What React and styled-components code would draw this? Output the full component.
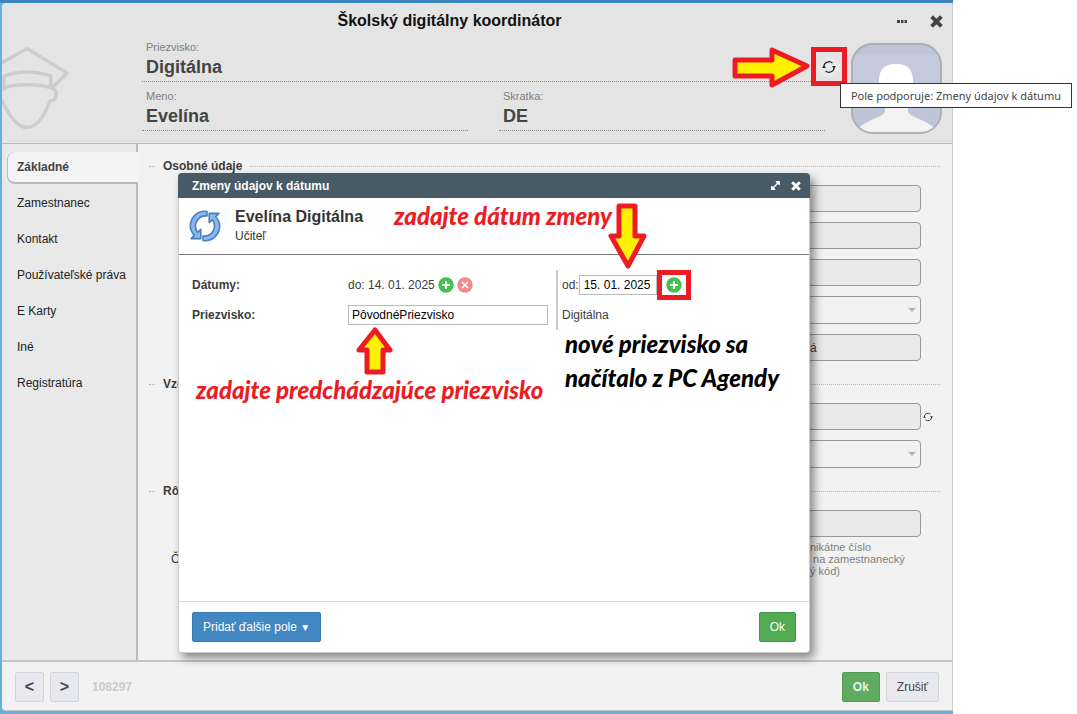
import React from "react";
import styled, { createGlobalStyle, css } from "styled-components";

const Global = createGlobalStyle`
  * { box-sizing: border-box; }
  body { margin: 0; background: #fff; color: #3c3c3c; font: 12px/14px "Liberation Sans", Arial, sans-serif; }
  button, input, select { font: inherit; color: inherit; margin: 0; }
  h1, h2, h3, p, ul { margin: 0; padding: 0; font-size: inherit; }
`;

const Desktop = styled.div`
  display: flex;
  min-height: 100vh;
  margin-right: 124px;
  padding: 3px 0 3px 2px;
  background: linear-gradient(#4682b4 0 1px, #2f8cc8 1px 3px, #63b1dd 3px);
`;

const Window = styled.main`
  position: relative;
  flex: 1;
  display: flex;
  flex-direction: column;
  background: #f2f2f2;
  border-right: 1px solid #ccc;
  border-bottom: 1px solid #c4c4c4;
  border-radius: 4px 0 0 4px;
`;

const Header = styled.header`
  position: relative;
  display: grid;
  grid-template-columns: 140px 1fr 127px;
  grid-template-rows: 36px auto;
  height: 141px;
  background: #e4e4e4;
  border-bottom: 1px solid #bbb;
  border-radius: 4px 0 0 0;
`;

const TitleBar = styled.div`
  grid-column: 1 / -1;
  display: grid;
  grid-template-columns: 1fr auto;
  align-items: center;
  padding: 0 9px 0 0;
`;

const Title = styled.h1`
  padding-left: 2px;
  text-align: center;
  color: #111;
  font-size: 16px;
  line-height: 20px;
`;

const IconButton = styled.button`
  display: inline-flex;
  align-items: center;
  justify-content: center;
  width: ${(p) => p.$size || 14}px;
  height: ${(p) => p.$size || 14}px;
  padding: 0;
  border: 0;
  border-radius: 50%;
  background: ${(p) => p.$bg || "transparent"};
  flex: none;
`;

const WindowTools = styled.div`
  display: flex;
  gap: 20px;
  color: #444;
`;

const Identity = styled.div`
  display: grid;
  grid-template-columns: 1fr 1fr;
  column-gap: 31px;
  align-content: start;
`;

const Fact = styled.div`
  height: ${(p) => (p.$wide ? 43 : 49)}px;
  grid-column: ${(p) => (p.$wide ? "1 / -1" : "auto")};
  padding: ${(p) => (p.$wide ? 1 : 7)}px 4px 0;
  border-bottom: 1px dotted #888;
  span { display: block; color: #808080; font-size: 11px; line-height: 14px; }
  strong { display: block; padding-top: 3px; color: #444; font-size: 18px; line-height: 20px; }
`;

const AvatarSlot = styled.div`
  padding: 4px 0 0 26px;
  svg { display: block; }
`;

const Body = styled.div`
  flex: 1;
  display: flex;
`;

const Sidebar = styled.nav`
  width: 136px;
  padding: 5px 0 0 5px;
  background: #e9e9e9;
  border-right: 2px solid #bbb;
  ul { list-style: none; }
`;

const NavLink = styled.a`
  display: flex;
  align-items: center;
  height: 32px;
  margin: 0 -2px 4px 0;
  padding-left: 10px;
  color: #222;
  text-decoration: none;
  white-space: nowrap;
  ${(p) => p.$active && css`
    margin-top: 3px;
    margin-bottom: 3px;
    padding-left: 9px;
    color: #444;
    font-weight: bold;
    background: #f4f4f4;
    border: solid #bbb;
    border-width: 0 0 2px 1px;
    border-radius: 8px 0 0 8px;
  `}
`;

const Form = styled.form`
  flex: 1;
  padding: 15px 12px 0 11px;
`;

const Group = styled.section`
  margin-bottom: 16px;
`;

const GroupTitle = styled.h2`
  display: flex;
  align-items: center;
  gap: 8px;
  margin-bottom: 12px;
  line-height: 14px;
  &::before, &::after { content: ""; border-top: 1px dotted #bbb; }
  &::before { width: 6px; }
  &::after { flex: 1; }
`;

const Field = styled.div`
  display: grid;
  grid-template-columns: 1fr 120px 19px;
  align-items: center;
  margin-bottom: ${(p) => (p.$tight ? 4 : 10)}px;
  label { padding-left: 22px; }
`;

const TextBox = styled.input`
  width: 100%;
  height: 27px;
  padding: 0 8px;
  background: #e9e9e9;
  border: 1px solid #999;
  border-radius: 4px;
`;

const SelectWrap = styled.div`
  position: relative;
  select {
    display: block;
    width: 100%;
    height: 28px;
    appearance: none;
    background: #f2f2f2;
    border: 1px solid #999;
    border-radius: 4px;
  }
  &::after {
    content: "";
    position: absolute;
    right: 5px;
    top: 12px;
    border: solid transparent;
    border-width: 4px 4px 0;
    border-top-color: #b5b5b5;
    pointer-events: none;
  }
`;

const Note = styled.p`
  padding-left: 9px;
  color: #808080;
  font-size: 11px;
  line-height: 12px;
  white-space: pre;
`;

const Footer = styled.footer`
  display: flex;
  align-items: center;
  gap: 6px;
  height: 50px;
  padding: 2px 13px 0;
  border-top: 2px solid #c4c4c4;
  border-bottom-left-radius: 4px;
  background: #f2f2f2;
`;

const Button = styled.button`
  height: 30px;
  padding: 0 10px;
  border: 1px solid #d3d4da;
  border-radius: 2px;
  background: #e8e9ee;
  color: #444;
  white-space: nowrap;
  ${(p) => p.$tone === "green" && css`background: #51ab53; border-color: #46964a; color: #fff;`}
  ${(p) => p.$tone === "muted" && css`background: #5fab60; border-color: #539c56; color: #e8f3e8; font-weight: bold;`}
  ${(p) => p.$tone === "blue" && css`background: #4187c1; border-color: #3779b2; color: #fff;`}
  ${(p) => p.$square && css`width: 29px; padding: 0; font-size: 16px; font-weight: bold;`}
`;

const Caret = styled.span`
  font-size: 10px;
`;

const RecordId = styled.span`
  margin: 0 auto 0 7px;
  color: #ccc;
  font-weight: bold;
`;

const Dialog = styled.section`
  position: absolute;
  top: 170px;
  left: 176px;
  right: 142px;
  background: #fff;
  border: solid #ccc;
  border-width: 0 1px 1px;
  border-radius: 4px;
  box-shadow: 4px 5px 10px rgba(0, 0, 0, 0.45);
`;

const DialogBar = styled.header`
  display: flex;
  align-items: center;
  gap: 7px;
  height: 25px;
  margin: 0 -1px;
  padding: 0 7px 0 14px;
  border-radius: 4px 4px 0 0;
  background: #475a65;
  color: #fff;
  h2 { flex: 1; }
`;

const Person = styled.div`
  display: flex;
  gap: 14px;
  height: 57px;
  padding: 9px 10px;
  border-bottom: 1px solid #777;
  svg { margin-top: 3px; flex: none; }
  h3 { color: #333; font-size: 16px; line-height: 20px; }
  p { line-height: 18px; color: #333; }
`;

const DialogBody = styled.div`
  min-height: 346px;
  padding: 15px 13px 0;
`;

const Changes = styled.table`
  width: 100%;
  border-collapse: collapse;
  table-layout: fixed;
  th, td { height: 30px; padding: 0; text-align: left; vertical-align: middle; }
  th { width: 156px; }
  td:nth-child(2) { width: 209px; border-right: 2px solid #ccc; }
  td:nth-child(3) { padding-left: 4px; }
`;

const Line = styled.div`
  display: flex;
  align-items: center;
  gap: 3px;
  white-space: nowrap;
`;

const PlainInput = styled.input`
  display: block;
  width: ${(p) => p.$width}px;
  height: 20px;
  padding: 0 ${(p) => p.$pad || 3}px;
  border: 1px solid #bbb;
  border-radius: 0;
  color: #000;
  background: #fff;
`;

const DateEntry = styled.div`
  display: flex;
  align-items: center;
`;

const Highlight = styled.span`
  display: flex;
  align-items: center;
  justify-content: center;
  width: ${(p) => p.$w}px;
  height: ${(p) => p.$h}px;
  border: 5px solid #ed1c24;
`;

const DialogFooter = styled.footer`
  display: flex;
  align-items: center;
  justify-content: space-between;
  height: 51px;
  padding: 0 13px;
  border-top: 1px solid #d8d8d8;
`;

const HistorySpot = styled.div`
  position: absolute;
  top: 44px;
  right: 105px;
`;

const Tooltip = styled.div`
  position: absolute;
  z-index: 2;
  top: 80px;
  right: -120px;
  padding: 3px 10px;
  border: 1px solid #333;
  background: #fff;
  color: #444;
  font: 11px/17px "Noto Sans", sans-serif;
  white-space: nowrap;
`;

const Marker = styled.svg`
  position: absolute;
  left: ${(p) => p.$x}px;
  top: ${(p) => p.$y}px;
  right: ${(p) => p.$right}px;
  fill: #fff200;
  stroke: #ed1c24;
  stroke-width: 5;
  stroke-linejoin: round;
`;

const Handwriting = styled.p`
  position: absolute;
  left: ${(p) => p.$x}px;
  top: ${(p) => p.$y}px;
  color: ${(p) => p.$color || "#ed1c24"};
  font: italic 900 24px/34px Lato, cursive;
  white-space: pre;
`;

const Cross = ({ size = 13, ...rest }) => (
  <svg width={size} height={size} viewBox="0 0 12 12" stroke="currentColor" strokeWidth="3.6" {...rest}>
    <path d="M1.5 1.5 10.5 10.5M10.5 1.5 1.5 10.5" />
  </svg>
);

const Cycle = ({ size }) => (
  <svg width={size} height={size} viewBox="0 0 14 14" fill="none" stroke="#222" strokeWidth="1.2">
    <path d="M1.800 7A5.200 5.200 0 0 1 10.500 3.100M12.200 7A5.200 5.200 0 0 1 3.500 10.900" />
    <path d="M0 8 2 5.500 4 8ZM14 6 12 8.500 10 6Z" fill="#222" stroke="none" />
  </svg>
);

const BigCycle = () => (
  <svg width="32" height="32" viewBox="0 0 32 32" fill="#8bb8ea" stroke="#4a7fbe" strokeWidth="1.6" strokeLinejoin="round">
    <path d="M18 1.500C9 0 1.500 7 1.300 16c.2 4.200 1.800 7 4 9.200L2.200 28.600h9.600v-9.200l-3.200 3.100C3.500 15 8.500 5 18 6Z" />
    <path d="M14 30.500c9 1.500 16.500-5.500 16.700-14.500-.2-4.200-1.800-7-4-9.200l3.100-3.400h-9.600v9.200l3.200-3.100C28.500 17 23.500 27 14 26Z" />
  </svg>
);

const Round = ({ cross }) => (
  <svg width="16" height="16" viewBox="0 0 16 16" fill="none" stroke="#fff" strokeWidth={cross ? 1.6 : 2}>
    <circle cx="8" cy="8" r="7.700" fill={cross ? "#f18a8a" : "#43c14e"} stroke="none" />
    <path d={cross ? "M5 5 11 11M11 5 5 11" : "M8 4V12M4 8H12"} />
  </svg>
);

const Graduate = () => (
  <svg width="70" height="95" viewBox="2 40 70 95" fill="none" stroke="#cdcdcd" strokeWidth="3.500" strokeLinejoin="round">
    <path d="M0 65 27 49.500 67 74 51 90" />
    <path d="M4 92V77Q27 69 51 77V88M4 88.500Q27 82.500 51 88.500" />
    <path d="M51 89Q57 90 56 97 55 102 50 102C44 118 37 128.500 27 128.500S9 117 2 101" />
  </svg>
);

const Avatar = () => (
  <svg width="91" height="91" viewBox="0 0 91 91" role="img" aria-label="Evelína Digitálna">
    <defs><clipPath id="frame"><rect width="90" height="90" rx="21" /></clipPath></defs>
    <g clipPath="url(#frame)">
      <rect width="90" height="90" fill="#bfc4d6" />
      <rect y="11" width="90" height="55" fill="#c4c9dd" />
      <path d="M28 39C28 26 34 21 45 21S62 26 62 39C62 49 57 55 57 62V69C62 76 78 77 86 88V91H5V88C13 77 29 76 34 69V62C33 55 28 49 28 39Z" fill="#f3f3f3" />
      <path d="M28 39C28 26 34 21 45 21S62 26 62 39C62 49 57 55 57 60H34C33 55 28 49 28 39Z" fill="#fff" />
    </g>
    <rect x="1" y="1" width="89" height="89" rx="21" fill="none" stroke="#adb0b8" strokeWidth="2" />
  </svg>
);

const SECTIONS = ["Základné", "Zamestnanec", "Kontakt", "Používateľské práva", "E Karty", "Iné", "Registratúra"];

const Select = ({ label }) => (
  <Field><span /><SelectWrap><select aria-label={label}><option /></select></SelectWrap></Field>
);
const Input = ({ label, value = "", tight, children }) => (
  <Field $tight={tight}><span /><TextBox aria-label={label} defaultValue={value} />{children}</Field>
);

function ChangesDialog() {
  return (
    <Dialog role="dialog" aria-labelledby="changes-title">
      <DialogBar>
        <h2 id="changes-title">Zmeny údajov k dátumu</h2>
        <IconButton type="button" aria-label="Zväčšiť">
          <svg width="9" height="9" viewBox="0 0 9 9" fill="#fff" stroke="#fff">
            <path d="M5 .5H8.500V4ZM.5 5V8.500H4Z" /><path d="M2 7 7 2" strokeWidth="1.500" />
          </svg>
        </IconButton>
        <IconButton type="button" aria-label="Zavrieť"><Cross size={10} /></IconButton>
      </DialogBar>
      <Person>
        <BigCycle />
        <div><h3>Evelína Digitálna</h3><p>Učiteľ</p></div>
      </Person>
      <DialogBody>
        <Changes>
          <tbody>
            <tr>
              <th scope="row">Dátumy:</th>
              <td>
                <Line>
                  do: 14. 01. 2025
                  <IconButton type="button" $size={16} aria-label="Pridať dátum"><Round /></IconButton>
                  <IconButton type="button" $size={16} aria-label="Odstrániť dátum"><Round cross /></IconButton>
                </Line>
              </td>
              <td>
                <DateEntry>
                  <label htmlFor="from">od:</label>
                  <PlainInput id="from" $width={78} $pad={4} defaultValue="15. 01. 2025" />
                  <Highlight $w={34} $h={30}>
                    <IconButton type="button" $size={16} aria-label="Pridať zmenu"><Round /></IconButton>
                  </Highlight>
                </DateEntry>
              </td>
            </tr>
            <tr>
              <th scope="row"><label htmlFor="surname">Priezvisko:</label></th>
              <td><PlainInput id="surname" $width={200} defaultValue="PôvodnéPriezvisko" /></td>
              <td>Digitálna</td>
            </tr>
          </tbody>
        </Changes>
      </DialogBody>
      <DialogFooter>
        <Button type="button" $tone="blue">Pridať ďalšie pole <Caret>▼</Caret></Button>
        <Button type="button" $tone="green">Ok</Button>
      </DialogFooter>

      <Handwriting $x={215} $y={26}>zadajte dátum zmeny</Handwriting>
      <Handwriting $x={17} $y={200}>zadajte predchádzajúce priezvisko</Handwriting>
      <Handwriting $x={386} $y={154} $color="#000">{"nové priezvisko sa\nnačítalo z PC Agendy"}</Handwriting>
      <Marker $x={429} $y={30} width="40" height="68"><path d="M11 3H27V33H36L20 63 3 33H11Z" /></Marker>
      <Marker $x={177} $y={153} width="38" height="50"><path d="M19 4 34 24H27V46H11V24H3Z" /></Marker>
    </Dialog>
  );
}

export default function App() {
  return (
    <>
      <Global />
      <Desktop>
        <Window>
          <Header>
            <TitleBar>
              <Title>Školský digitálny koordinátor</Title>
              <WindowTools>
                <IconButton type="button" aria-label="Viac">
                  <svg width="12" height="3" viewBox="0 0 12 3" fill="#444"><path d="M1 0h3v3H1zM5 0h2.500v3H5zM8.500 0h2.500v3H8.500z" /></svg>
                </IconButton>
                <IconButton type="button" aria-label="Zavrieť okno"><Cross size={13} /></IconButton>
              </WindowTools>
            </TitleBar>
            <Graduate />
            <Identity>
              <Fact $wide><span>Priezvisko:</span><strong>Digitálna</strong></Fact>
              <Fact><span>Meno:</span><strong>Evelína</strong></Fact>
              <Fact><span>Skratka:</span><strong>DE</strong></Fact>
            </Identity>
            <AvatarSlot><Avatar /></AvatarSlot>
            <HistorySpot>
              <Highlight $w={36} $h={39}>
                <IconButton type="button" $size={20} $bg="#e9e9e9" aria-label="Zmeny údajov k dátumu"><Cycle size={14} /></IconButton>
              </Highlight>
            </HistorySpot>
            <Marker $right={139} $y={41} width="82" height="46"><path d="M4 16H41V6L76 22 41 41V32H4Z" /></Marker>
            <Tooltip role="tooltip">Pole podporuje: Zmeny údajov k dátumu</Tooltip>
          </Header>
          <Body>
            <Sidebar>
              <ul>
                {SECTIONS.map((name, i) => (
                  <li key={name}><NavLink href="#" $active={i === 0}>{name}</NavLink></li>
                ))}
              </ul>
            </Sidebar>
            <Form>
              <Group>
                <GroupTitle>Osobné údaje</GroupTitle>
                <Input label="Údaj 1" />
                <Input label="Údaj 2" />
                <Input label="Údaj 3" />
                <Select label="Údaj 4" />
                <Input label="Údaj 5" value="á" />
              </Group>
              <Group>
                <GroupTitle>Vzd</GroupTitle>
                <Input label="Údaj 6">
                  <IconButton type="button" aria-label="História"><Cycle size={10} /></IconButton>
                </Input>
                <Select label="Údaj 7" />
              </Group>
              <Group>
                <GroupTitle>Rô</GroupTitle>
                <Input label="Číslo" tight />
                <Field><label>Č</label><Note>{"nikátne číslo\n na zamestnanecký\ný kód)"}</Note></Field>
              </Group>
            </Form>
          </Body>
          <Footer>
            <Button type="button" $square>&lt;</Button>
            <Button type="button" $square>&gt;</Button>
            <RecordId>108297</RecordId>
            <Button type="button" $tone="muted">Ok</Button>
            <Button type="button">Zrušiť</Button>
          </Footer>
          <ChangesDialog />
        </Window>
      </Desktop>
    </>
  );
}
